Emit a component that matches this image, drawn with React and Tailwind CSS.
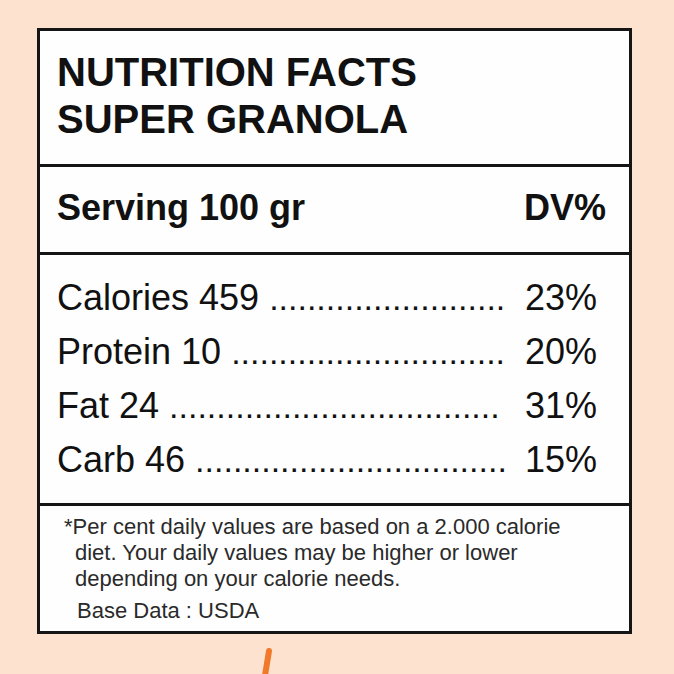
import React from 'react';

const rows = [
    { label: 'Calories 459', dots: 25, dv: '23%' },
    { label: 'Protein 10', dots: 29, dv: '20%' },
    { label: 'Fat 24', dots: 35, dv: '31%' },
    { label: 'Carb 46', dots: 33, dv: '15%' },
];

const App = () => {
    return (
        <div className="w-[674px] h-[674px] overflow-hidden bg-[#fde2cf] pt-[28px] pl-[37px] font-['Liberation_Sans',Arial,sans-serif] text-[#111]">
            <div className="w-[595px] h-[606px] border-[3px] border-[#151515] bg-[#fefefe] flex flex-col">
                {/* Title */}
                <div className="h-[133px] px-[17px] pt-[18px]">
                    <h1 className="text-[40px] leading-[47px] font-bold">
                        NUTRITION FACTS<br />SUPER GRANOLA
                    </h1>
                </div>
                <div className="h-[3px] bg-[#151515]" />

                {/* Serving */}
                <div className="h-[85px] pl-[17px] pr-[23px] pt-[21px] flex justify-between">
                    <span className="text-[36px] leading-[40px] font-bold">Serving 100 gr</span>
                    <span className="text-[36px] leading-[40px] font-bold">DV%</span>
                </div>
                <div className="h-[3px] bg-[#151515]" />

                {/* Rows */}
                <div className="h-[248px] pl-[17px] pr-[32px] pt-[16px] flex flex-col">
                    {rows.map((r) => (
                        <div key={r.label} className="h-[54px] flex justify-between text-[36px] leading-[54px] whitespace-nowrap">
                            <span>{r.label} <span className="text-[34px]">{'.'.repeat(r.dots)}</span></span>
                            <span>{r.dv}</span>
                        </div>
                    ))}
                </div>
                <div className="h-[3px] bg-[#151515]" />

                {/* Footnote */}
                <div className="flex-1 pl-[24px] pt-[8px] text-[22px] leading-[26px] text-[#2a2a2a]">
                    <p>*Per cent daily values are based on a 2.000 calorie</p>
                    <p className="pl-[11px]">diet. Your daily values may be higher or lower</p>
                    <p className="pl-[11px]">depending on your calorie needs.</p>
                    <p className="pl-[13px] mt-[6px]">Base Data : USDA</p>
                </div>
            </div>
            <svg width="20" height="40" className="ml-[222px] mt-[14px] block" viewBox="0 0 20 40">
                <path d="M10 3 L4 40" stroke="#f07a2a" strokeWidth="6" strokeLinecap="round" />
            </svg>
        </div>
    );
};

export default App;
